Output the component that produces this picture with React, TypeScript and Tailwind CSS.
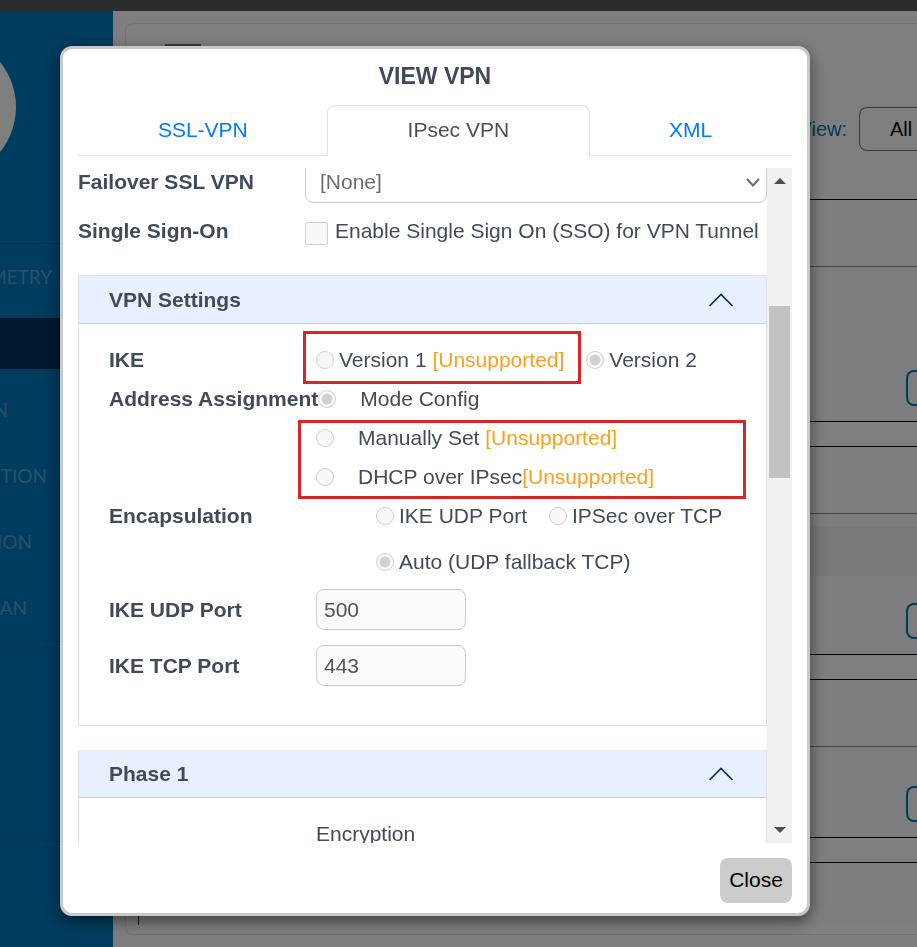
import { type ReactNode } from "react";

const NAV_ITEMS = [
  { label: "METRY", width: "w-[52px]", active: false },
  { label: "", width: "w-[52px]", active: true },
  { label: "N", width: "w-2", active: false },
  { label: "TION", width: "w-[47px]", active: false },
  { label: "ION", width: "w-8", active: false },
  { label: "AN", width: "w-[27px]", active: false },
];

const PORTS = [
  { id: "ike-udp-port", label: "IKE UDP Port", value: "500" },
  { id: "ike-tcp-port", label: "IKE TCP Port", value: "443" },
];

function Sidebar() {
  return (
    <aside className="w-[113px] shrink-0 overflow-hidden bg-[#0078bc]">
      <div className="-ml-[126px] mt-[25px] size-[142px] rounded-full bg-white" />
      <nav className="mt-[65px] border-y border-[#005a90] font-[Lato,sans-serif] text-[19px] text-[#50a0d8]">
        {NAV_ITEMS.map((item, i) =>
          item.active ? (
            <div key={i} className="my-2 h-[51px] bg-[#00305a]" />
          ) : (
            <a key={i} href="#" className="flex h-[66px] items-center">
              <span className={`flex justify-end ${item.width}`}>{item.label}</span>
            </a>
          )
        )}
      </nav>
      <div className="h-[200px] border-b border-[#005a90]" />
    </aside>
  );
}

function OutlineButton() {
  return (
    <button
      type="button"
      aria-label="Open"
      className="ml-auto block h-9 w-[11px] rounded-l-lg border-2 border-r-0 border-[#0078bc]"
    />
  );
}

function Panel({ children }: { children?: ReactNode }) {
  return (
    <section className="border-y border-l border-black bg-[#fafafe]">
      <div className="h-[67px] border-b border-[#8c8c8c]" />
      {children}
    </section>
  );
}

function Background() {
  return (
    <div className="flex min-h-screen flex-col bg-[#fcfcff]">
      <div className="h-[11px] bg-[#55585a]" />
      <div className="flex flex-1">
        <Sidebar />
        <main className="flex min-w-0 flex-1 flex-col pt-3 pb-3 pl-3">
          <div className="flex-1 rounded-l-lg border border-r-0 border-[#e0eaf0] bg-white">
            <div className="h-[63px] pt-5 pl-[39px]">
              <div className="h-1 w-9 bg-[#777]" />
            </div>
            <div className="flex items-center justify-end gap-3 pt-5">
              <label htmlFor="view" className="text-[20px] text-[#0078bc]">
                View:
              </label>
              <select
                id="view"
                className="h-11 w-[58px] appearance-none rounded-l-lg border border-r-0 border-[#777] bg-white pl-[30px] text-[20px] text-black"
              >
                <option>All</option>
              </select>
            </div>
            <div className="mt-12 ml-3 flex flex-col gap-6">
              <Panel>
                <div className="h-[154px] pt-[103px]">
                  <OutlineButton />
                </div>
              </Panel>
              <Panel>
                <div className="h-[140px] pt-3">
                  <div className="mb-[27px] h-[50px] bg-[#f0f0f2]" />
                  <OutlineButton />
                </div>
              </Panel>
              <Panel>
                <div className="h-[90px] pt-[39px]">
                  <OutlineButton />
                </div>
              </Panel>
              <div className="h-[63px] border-t border-l border-black bg-[#fafafe]" />
            </div>
          </div>
        </main>
      </div>
    </div>
  );
}

function ChevronUp() {
  return (
    <svg width="26" height="14" viewBox="0 0 26 14" fill="none" stroke="#0b2a5b" strokeWidth="1.7">
      <path d="M1.5 13 L13 1.5 L24.5 13" />
    </svg>
  );
}

function AccordionHeader({ title }: { title: string }) {
  return (
    <button
      type="button"
      aria-expanded="true"
      className="flex h-[48px] w-full items-center justify-between border-b border-[#c3d0e2] bg-[#e7f0ff] pr-8 pl-[30px] font-bold"
    >
      {title}
      <ChevronUp />
    </button>
  );
}

function Radio({
  name,
  checked,
  wide,
  children,
}: {
  name: string;
  checked?: boolean;
  wide?: boolean;
  children: ReactNode;
}) {
  return (
    <label className={`flex h-[39px] items-center whitespace-pre ${wide ? "gap-6" : "gap-[5px]"}`}>
      <input type="radio" name={name} defaultChecked={checked} disabled className="size-[18px] shrink-0" />
      <span>{children}</span>
    </label>
  );
}

function Unsupported() {
  return <span className="text-[#f9a11b]">[Unsupported]</span>;
}

function RowLabel({ children }: { children?: ReactNode }) {
  return <div className="min-w-[207px] shrink-0 font-bold leading-[39px]">{children}</div>;
}

function Scrollbar() {
  return (
    <div className="flex w-[25px] shrink-0 flex-col items-center bg-[#f1f1f1] py-[10px]">
      <svg width="12" height="6" viewBox="0 0 12 6" fill="#505050">
        <path d="M0 6 L6 0 L12 6 Z" />
      </svg>
      <div className="mt-[122px] h-[172px] w-[21px] bg-[#c1c1c1]" />
      <svg width="12" height="6" viewBox="0 0 12 6" fill="#505050" className="mt-auto">
        <path d="M0 0 L6 6 L12 0 Z" />
      </svg>
    </div>
  );
}

function Tabs() {
  return (
    <div role="tablist" className="flex h-[51px] border-b border-[#dee2e6] text-[#007bff]">
      <button type="button" role="tab" className="flex-auto">
        SSL-VPN
      </button>
      <button
        type="button"
        role="tab"
        aria-selected="true"
        className="-mx-px -mb-px flex-auto rounded-t-lg border border-b-0 border-[#dee2e6] bg-white pb-0.5 text-[#495057]"
      >
        IPsec VPN
      </button>
      <button type="button" role="tab" className="flex-auto">
        XML
      </button>
    </div>
  );
}

function VpnSettings() {
  return (
    <section className="mt-[30px] border border-[#dee2e6]">
      <AccordionHeader title="VPN Settings" />
      <div className="px-[30px] pt-4 pb-[39px]">
        <div className="flex">
          <RowLabel>IKE</RowLabel>
          <div className="flex gap-[22px]">
            <div className="relative">
              <Radio name="ike">
                Version 1 <Unsupported />
              </Radio>
              <div className="absolute -top-[9px] -right-[17px] -bottom-[5px] -left-[13px] border-3 border-[#d62728]" />
            </div>
            <Radio name="ike" checked>
              Version 2
            </Radio>
          </div>
        </div>
        <div className="flex">
          <RowLabel>Address Assignment</RowLabel>
          <Radio name="address" checked wide>
            Mode Config
          </Radio>
        </div>
        <div className="flex">
          <RowLabel />
          <div className="relative flex-1">
            <Radio name="address" wide>
              Manually Set <Unsupported />
            </Radio>
            <Radio name="address" wide>
              DHCP over IPsec
              <Unsupported />
            </Radio>
            <div className="absolute top-[2px] -right-[10px] -bottom-[3px] -left-[18px] border-3 border-[#d62728]" />
          </div>
        </div>
        <div className="flex">
          <RowLabel>Encapsulation</RowLabel>
          <div className="flex flex-wrap gap-x-[22px] gap-y-[7px] pl-[60px]">
            <Radio name="encapsulation">IKE UDP Port</Radio>
            <Radio name="encapsulation">IPSec over TCP</Radio>
            <Radio name="encapsulation" checked>
              Auto (UDP fallback TCP)
            </Radio>
          </div>
        </div>
        <div className="mt-2 flex flex-col gap-[15px]">
          {PORTS.map((p) => (
            <div key={p.id} className="flex items-center">
              <label htmlFor={p.id} className="w-[207px] font-bold">
                {p.label}
              </label>
              <input
                id={p.id}
                type="text"
                defaultValue={p.value}
                disabled
                className="h-[41px] w-[150px] rounded-lg border border-[#ccc] bg-[#fafafa] px-[7px] text-[#545454]"
              />
            </div>
          ))}
        </div>
      </div>
    </section>
  );
}

export default function App() {
  return (
    <div className="relative font-['Liberation_Sans',Arial,sans-serif]">
      <Background />
      <div className="fixed inset-0 bg-black/50 pt-[46px] pr-[107px] pb-[31px] pl-[60px]">
        <div
          role="dialog"
          aria-label="View VPN"
          className="flex h-full flex-col rounded-xl border-3 border-[#c8c8c8] bg-white px-[15px] pb-[10px] text-[21px] leading-6 text-[#404a5a] shadow-[0_5px_15px_rgba(0,0,0,0.5)]"
        >
          <h1 className="pt-[15px] pb-[17px] text-center text-[23px] font-bold">VIEW VPN</h1>
          <Tabs />
          <div className="mt-3 flex min-h-0 flex-1">
            <div className="min-w-0 flex-1 overflow-hidden">
              <div className="-mt-[6px] flex items-center">
                <label htmlFor="failover" className="w-[227px] shrink-0 pb-0.5 font-bold">
                  Failover SSL VPN
                </label>
                <div className="relative flex-1">
                  <select
                    id="failover"
                    disabled
                    className="block h-[41px] w-full appearance-none rounded-lg border border-[#ccc] bg-white pb-0.5 pl-[14px] text-[#6c6c6c]"
                  >
                    <option>[None]</option>
                  </select>
                  <svg
                    width="14"
                    height="9"
                    viewBox="0 0 14 9"
                    fill="none"
                    stroke="#6c6c6c"
                    strokeWidth="2"
                    className="absolute top-4 right-[7px]"
                  >
                    <path d="M1 1 L7 7.5 L13 1" />
                  </svg>
                </div>
              </div>
              <div className="mt-[15px] flex items-center">
                <div className="w-[227px] shrink-0 pb-0.5 font-bold">Single Sign-On</div>
                <label className="flex flex-1 items-center gap-[7px] whitespace-nowrap">
                  <input type="checkbox" disabled className="mt-1 size-[23px] shrink-0" />
                  <span className="pb-0.5">Enable Single Sign On (SSO) for VPN Tunnel</span>
                </label>
              </div>
              <VpnSettings />
              <section className="mt-6 border-x border-[#dee2e6]">
                <AccordionHeader title="Phase 1" />
                <div className="flex px-[30px] pt-4 pb-10">
                  <div className="ml-[207px] leading-[39px]">Encryption</div>
                </div>
              </section>
            </div>
            <Scrollbar />
          </div>
          <button
            type="button"
            className="mt-[15px] h-[45px] w-[72px] self-end rounded-lg bg-[#ccc] pb-0.5 text-black"
          >
            Close
          </button>
        </div>
      </div>
    </div>
  );
}
